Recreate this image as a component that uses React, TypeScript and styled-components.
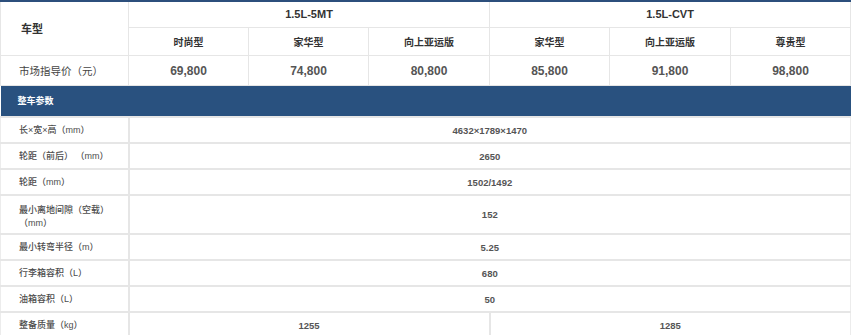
import React from "react";
import styled, { createGlobalStyle } from "styled-components";

const GlobalStyle = createGlobalStyle`
  body {
    margin: 0;
    background: #fff;
    font-family: "Liberation Sans", "Noto Sans CJK SC", sans-serif;
  }
`;

const Table = styled.table`
  width: 850px;
  table-layout: fixed;
  border-collapse: collapse;
  border-top: 2px solid #2c4f7c;
`;

const HeadCell = styled.td<{ $left?: boolean; $big?: boolean }>`
  border: 1px solid #e6e6e6;
  padding: ${(p) => (p.$left ? "0 0 0 20px" : "0")};
  text-align: ${(p) => (p.$left ? "left" : "center")};
  font-size: ${(p) => (p.$big ? "11px" : "10px")};
  font-weight: bold;
  color: #333;
`;

const PriceCell = styled.td<{ $label?: boolean }>`
  border: 1px solid #e6e6e6;
  padding: ${(p) => (p.$label ? "1px 0 0 18px" : "1px 0 0")};
  text-align: ${(p) => (p.$label ? "left" : "center")};
  font-size: ${(p) => (p.$label ? "10.5px" : "12px")};
  font-weight: ${(p) => (p.$label ? "normal" : "bold")};
  color: ${(p) => (p.$label ? "#444" : "#555")};
`;

const SectionCell = styled.td`
  padding: 0 0 0 17px;
  background: #29517f;
  border-bottom: 1px solid #c6d4e4;
  color: #fff;
  font-size: 9px;
  font-weight: bold;
`;

const LabelCell = styled.td<{ $tall?: boolean }>`
  border: 2px solid #e6e6e6;
  border-left: 1px solid #ececec;
  padding: ${(p) => (p.$tall ? "5px 6px 0 18px" : "0 6px 0 18px")};
  font-size: 9px;
  font-weight: 500;
  line-height: 13px;
  color: #4d4d4d;
`;

const ValueCell = styled.td`
  border: 2px solid #e6e6e6;
  border-right: 1px solid #ececec;
  text-align: center;
  font-size: 9.5px;
  font-weight: bold;
  color: #555;
`;

const Row = styled.tr<{ $h: number }>`
  height: ${(p) => p.$h}px;
`;

const trims = ["时尚型", "家华型", "向上亚运版", "家华型", "向上亚运版", "尊贵型"];
const prices = ["69,800", "74,800", "80,800", "85,800", "91,800", "98,800"];

const specs: { label: string; value: string; h: number; tall?: boolean }[] = [
  { label: "长×宽×高（mm）", value: "4632×1789×1470", h: 26 },
  { label: "轮距（前后） （mm）", value: "2650", h: 26 },
  { label: "轮距（mm）", value: "1502/1492", h: 26 },
  { label: "最小离地间隙（空载）（mm）", value: "152", h: 39, tall: true },
  { label: "最小转弯半径（m）", value: "5.25", h: 26 },
  { label: "行李箱容积（L）", value: "680", h: 26 },
  { label: "油箱容积（L）", value: "50", h: 26 },
];

export default function App() {
  return (
    <>
      <GlobalStyle />
      <Table>
        <colgroup>
          <col style={{ width: 128 }} />
          <col style={{ width: 120 }} />
          <col style={{ width: 120 }} />
          <col style={{ width: 121 }} />
          <col style={{ width: 120 }} />
          <col style={{ width: 121 }} />
          <col style={{ width: 120 }} />
        </colgroup>
        <tbody>
          <Row $h={26}>
            <HeadCell $left $big rowSpan={2}>
              车型
            </HeadCell>
            <HeadCell $big colSpan={3}>
              1.5L-5MT
            </HeadCell>
            <HeadCell $big colSpan={3}>
              1.5L-CVT
            </HeadCell>
          </Row>
          <Row $h={28}>
            {trims.map((t, i) => (
              <HeadCell key={i}>{t}</HeadCell>
            ))}
          </Row>
          <Row $h={30}>
            <PriceCell $label>市场指导价（元）</PriceCell>
            {prices.map((p) => (
              <PriceCell key={p}>{p}</PriceCell>
            ))}
          </Row>
          <Row $h={32}>
            <SectionCell colSpan={7}>整车参数</SectionCell>
          </Row>
          {specs.map((s) => (
            <Row $h={s.h} key={s.label}>
              <LabelCell $tall={s.tall}>{s.label}</LabelCell>
              <ValueCell colSpan={6}>{s.value}</ValueCell>
            </Row>
          ))}
          <Row $h={26}>
            <LabelCell>整备质量（kg）</LabelCell>
            <ValueCell colSpan={3}>1255</ValueCell>
            <ValueCell colSpan={3}>1285</ValueCell>
          </Row>
        </tbody>
      </Table>
    </>
  );
}
